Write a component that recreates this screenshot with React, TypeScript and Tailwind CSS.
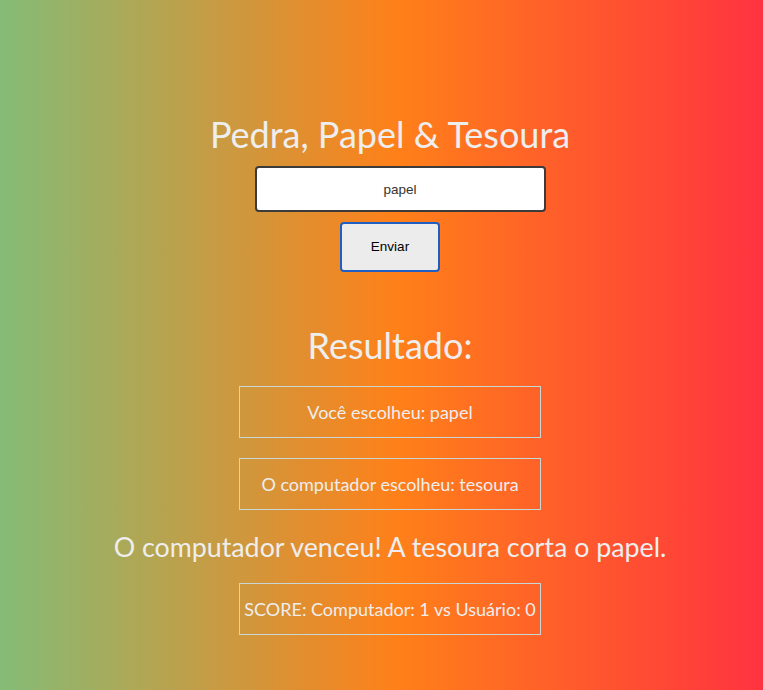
export default function App() {
  return (
    <div
      className="min-h-[690px] w-full bg-[linear-gradient(to_right,#84bc76_0%,#ff8019_52%,#ff3340_100%)] text-[#eeeeee] flex flex-col items-center pt-[112px] pl-[17px]"
      style={{ fontFamily: "Lato, 'Noto Sans', sans-serif" }}
    >
      <h1 className="text-[36px] leading-[44px] m-0">Pedra, Papel &amp; Tesoura</h1>
      <input
        defaultValue="papel"
        className="mt-[10px] ml-[20px] w-[291px] h-[46px] rounded-[4px] border-2 border-[#3b3b3b] bg-white text-center text-[13.5px] text-[#333] outline-none"
        style={{ fontFamily: "'Liberation Sans', Arial, sans-serif" }}
      />
      <button
        className="mt-[10px] w-[100px] h-[50px] rounded-[4px] border-2 border-[#1f5fc4] bg-[#ececec] text-[13.5px] text-black"
        style={{ fontFamily: "'Liberation Sans', Arial, sans-serif" }}
      >
        Enviar
      </button>
      <h2 className="mt-[51px] text-[36px] leading-[44px]">Resultado:</h2>
      <div className="mt-[19px] w-[302px] h-[52px] border border-[#c9d6d6] flex items-center justify-center text-[18px]">
        Você escolheu: papel
      </div>
      <div className="mt-[20px] w-[302px] h-[52px] border border-[#c9d6d6] flex items-center justify-center text-[18px]">
        O computador escolheu: tesoura
      </div>
      <p className="mt-[17px] text-[26.8px] leading-[40px]">O computador venceu! A tesoura corta o papel.</p>
      <div className="mt-[16px] w-[302px] h-[52px] border border-[#c9d6d6] flex items-center justify-center text-[18px]">
        SCORE: Computador: 1 vs Usuário: 0
      </div>
    </div>
  );
}
